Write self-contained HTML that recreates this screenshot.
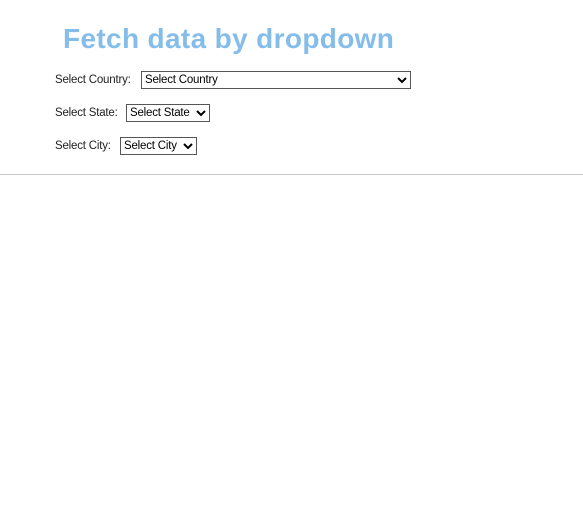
<!DOCTYPE html>
<html><head><style>
body{margin:0;width:583px;height:526px;background:#fff;font-family:"Liberation Sans",sans-serif;position:relative;overflow:hidden}
.t{position:absolute;left:63px;top:23px;font-size:28px;font-weight:bold;color:#85bdea;white-space:nowrap;letter-spacing:0.35px}
.l{position:absolute;left:55px;font-size:11.5px;color:#222;letter-spacing:-0.2px}
.s{position:absolute;height:16px;border:1px solid #555;font-size:11.5px;color:#000;box-sizing:content-box;letter-spacing:-0.2px}
.s span{position:absolute;left:3px;top:2px}
.s svg{position:absolute;right:3px;top:4px}
hr{position:absolute;top:174px;left:0;width:583px;margin:0;border:0;border-top:1px solid #ccc}
</style></head><body>
<div class="t">Fetch data by dropdown</div>
<div class="l" style="top:74px">Select Country:</div>
<div class="s" style="left:141px;top:71px;width:268px"><span>Select Country</span><svg width="10" height="8" viewBox="0 0 10 8"><path d="M1 2l4 4 4-4" stroke="#000" stroke-width="2" fill="none"/></svg></div>
<div class="l" style="top:107px">Select State:</div>
<div class="s" style="left:126px;top:104px;width:82px"><span>Select State</span><svg width="10" height="8" viewBox="0 0 10 8"><path d="M1 2l4 4 4-4" stroke="#000" stroke-width="2" fill="none"/></svg></div>
<div class="l" style="top:140px">Select City:</div>
<div class="s" style="left:120px;top:137px;width:75px"><span>Select City</span><svg width="10" height="8" viewBox="0 0 10 8"><path d="M1 2l4 4 4-4" stroke="#000" stroke-width="2" fill="none"/></svg></div>
<hr>
</body></html>
